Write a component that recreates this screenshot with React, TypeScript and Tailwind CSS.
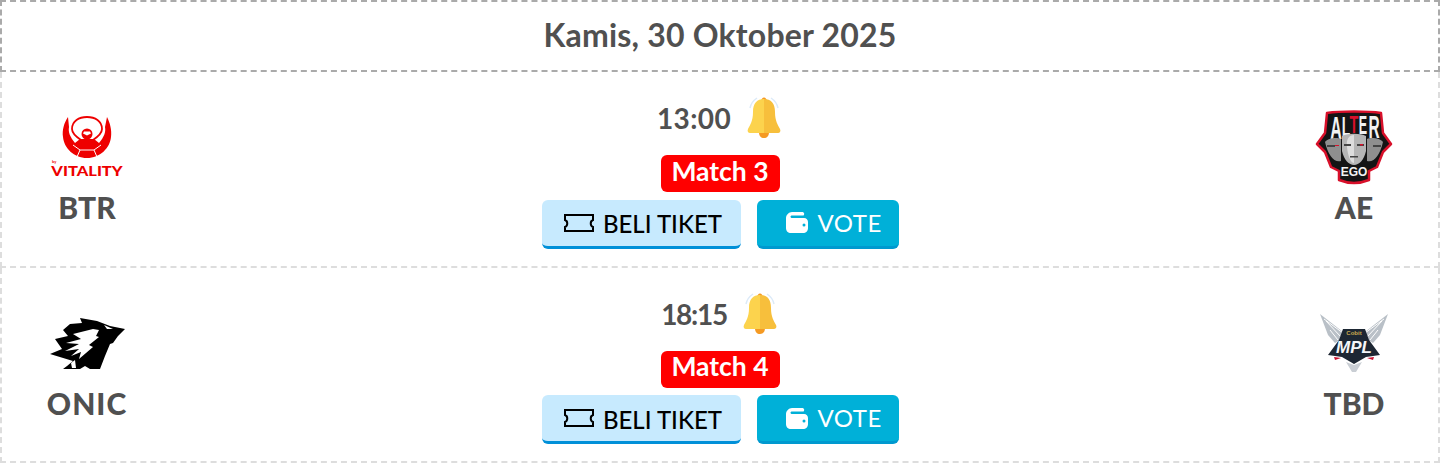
import React from 'react';

const VitalityLogo = () => (
  <svg viewBox="0 0 80 66" className="w-[80px] h-[66px]">
    <path fill="#ee0000" d="M21 3 C17 9 15 16 16 23 C17 34 27 44 40 44 C53 44 63 34 64 23 C65 16 63 9 60 3 L58 13 C59 18 57 23 52 29 L47 25 L33 25 L28 29 C23 23 21 18 22 13 Z" />
    <path fill="none" stroke="#ee0000" strokeWidth="1.8" d="M25 15 C25 7 32 3 40 3 C48 3 55 7 55 15 C55 19 49 24 46 26 M25 15 C25 19 31 24 34 26" />
    <circle cx="40" cy="20" r="5.5" fill="#ee0000" />
    <path fill="#ffffff" d="M37 17.5 h6 l1 2 -4 2 -4 -2z" />
    <path fill="none" stroke="#ffffff" strokeWidth="1" d="M26 31 L33 36 H47 L54 31 M33 36 L30 43 M47 36 L50 43" />
    <text x="5" y="49" fill="#ee0000" fontFamily="Lato, sans-serif" fontWeight="700" fontSize="4">by</text>
    <text transform="translate(40 62) scale(1.27 1)" textAnchor="middle" fill="#ee0000" fontFamily="Lato, sans-serif" fontWeight="900" fontSize="13">VITALITY</text>
  </svg>
);

const AlterLetter = ({ x, y, size, scale = 0.5, fill = '#f2f2f2', children }: { x: number; y: number; size: number; scale?: number; fill?: string; children: string }) => (
  <text transform={`translate(${x} ${y}) scale(${scale} 1)`} textAnchor="middle" fill={fill} fontFamily="Liberation Sans, sans-serif" fontWeight="700" fontSize={size}>
    {children}
  </text>
);

const AlterEgoLogo = () => (
  <svg viewBox="0 0 78 76" className="w-[78px] h-[76px]">
    <path fill="#141414" stroke="#d8102a" strokeWidth="2.5" strokeLinejoin="round" d="M12 4 C25 2 53 2 66 4 L68 24 L76 35 L68 43 L62 58 L54 62 L54 71 C44 75 34 75 24 71 L24 62 L16 58 L10 43 L2 35 L10 24 Z" />
    <AlterLetter x={21} y={30} size={32}>A</AlterLetter>
    <AlterLetter x={31} y={27} size={28}>L</AlterLetter>
    <AlterLetter x={39} y={24} size={24} scale={0.6} fill="#d8102a">T</AlterLetter>
    <AlterLetter x={48} y={25} size={25}>E</AlterLetter>
    <AlterLetter x={59} y={29} size={31}>R</AlterLetter>
    <path fill="#8f8f8f" d="M10 33 C13 29 22 28 26 30 L26 52 C19 54 13 46 10 33 Z M52 30 C56 28 65 29 68 33 C65 46 59 54 52 52 Z" />
    <path fill="#b5b5b5" d="M27 27 C33 24 45 24 51 27 L51 42 C49 51 44 56 39 56 C34 56 29 51 27 42 Z" />
    <path fill="#dddddd" d="M39 26 C34 26 31 30 32 38 C33 48 36 54 39 54 Z" />
    <path fill="#444444" d="M29 35 h7 v2 h-7z M42 35 h7 v2 h-7z M12 36 h8 v2 h-8z M58 36 h8 v2 h-8z M35 47 h8 v1.5 h-8z" />
    <path fill="#d8102a" d="M45 35 h3 v1.5 h-3z M20 36 h4 v1 h-4z" />
    <text x="39" y="67" textAnchor="middle" fill="#f2f2f2" fontFamily="Liberation Sans, sans-serif" fontWeight="700" fontSize="12">EGO</text>
  </svg>
);

const OnicLogo = () => (
  <svg viewBox="0 0 76 54" className="w-[76px] h-[54px]">
    <path fill="#000000" d="M31 2 L48 5 L61 10 L76 13 L69 20 L64 27 L61 28 L56 40 L51 53 L41 53 L36 50 L31 53 L14 53 L18 50 L24 45 L1 38 L13 33 L6 23 L19 20 L14 14 L21 8 L33 7 Z" />
    <path fill="#ffffff" d="M24 18 L44 13 L50 14 L47 20 L50 21 L40 29 L44 31 L30 43 L32 36 L22 40 L30 33 L16 35 L30 28 L17 27 L32 23 Z" />
    <path fill="#ffffff" d="M55 9 L64 13 L58 13 Z M22 47 L26 44 L27 52 L23 52 Z" />
  </svg>
);

const MplLogo = () => (
  <svg viewBox="0 0 70 60" className="w-[70px] h-[60px]">
    <path fill="#b9c0c7" d="M1 1 L24 19 L26 24 L16 30 L9 22 Z M69 1 L46 19 L44 24 L54 30 L61 22 Z" />
    <path fill="none" stroke="#ffffff" strokeWidth="1" d="M7 8 L22 24 M11 17 L19 27 M5 6 L24 20 M63 8 L48 24 M59 17 L51 27 M65 6 L46 20" />
    <path fill="#1d2733" d="M24 16 L46 16 L50 27 L61 42 L47 44 L35 51 L23 44 L9 42 L20 27 Z" />
    <path fill="#c9ced4" d="M27 49 L35 52 L43 49 L37 59 L33 59 Z" />
    <text x="35" y="40" textAnchor="middle" fill="#f4f6f8" fontFamily="Liberation Sans, sans-serif" fontWeight="700" fontStyle="italic" fontSize="17">MPL</text>
    <text x="35" y="22" textAnchor="middle" fill="#c9a94f" fontFamily="Liberation Sans, sans-serif" fontWeight="700" fontSize="6">Cobit</text>
    <path fill="#c8102e" d="M15 44 L22 45 L16 47 Z M55 44 L48 45 L54 47 Z" />
  </svg>
);

const Bell = () => (
  <svg viewBox="0 0 38 46" className="w-[38px] h-[46px]">
    <path fill="none" stroke="#dceaf8" strokeWidth="1.5" d="M5 14 C6 9 9 6 12 4 M33 14 C32 9 29 6 26 4" />
    <path fill="#f59a23" d="M14 38 h10 c0 4 -2 6 -5 6 s-5 -2 -5 -6z M16 8 c0 -6 6 -6 6 0z" />
    <path fill="#fcd34d" d="M19 5 C12 5 8 9 8 18 C8 27 5 31 3 35 C2 37 3 39 5 39 L19 39 Z" />
    <path fill="#f7bf3c" d="M19 5 C26 5 30 9 30 18 C30 27 33 31 35 35 C36 37 35 39 33 39 L19 39 Z" />
  </svg>
);

const Ticket = () => (
  <svg viewBox="0 0 30 18" className="w-[30px] h-[18px]" fill="none" stroke="#000000" strokeWidth="2">
    <path d="M1 1 H29 V6 C26 7 26 12 29 13 V17 H1 V13 C4 12 4 7 1 6 Z" />
  </svg>
);

const WalletIcon = () => (
  <svg viewBox="0 0 22 21" className="w-[22px] h-[21px]">
    <path fill="#ffffff" d="M6 0 H16 C18 0 19 2 17.5 3.5 H6 C4 3.5 4 6 6 6 H18 C20.5 6 22 8 22 10 V16 C22 19 20 21 17 21 H5 C2 21 0 19 0 16 V6 C0 3 3 0 6 0 Z" />
    <circle cx="18" cy="13" r="1.5" fill="#00b0d8" />
  </svg>
);

interface Match {
  home: string;
  homeClass: string;
  away: string;
  homeLogo: React.ReactNode;
  awayLogo: React.ReactNode;
  time: string;
  timeClass: string;
  label: string;
}

const matches: Match[] = [
  { home: 'BTR', homeClass: '', away: 'AE', homeLogo: <VitalityLogo />, awayLogo: <AlterEgoLogo />, time: '13:00', timeClass: 'tracking-[0.4px]', label: 'Match 3' },
  { home: 'ONIC', homeClass: 'tracking-[1px]', away: 'TBD', homeLogo: <OnicLogo />, awayLogo: <MplLogo />, time: '18:15', timeClass: 'tracking-[-1.3px]', label: 'Match 4' },
];

const Team = ({ logo, name, nameClass = '' }: { logo: React.ReactNode; name: string; nameClass?: string }) => (
  <div className="w-[100px] flex flex-col items-center">
    <div className="h-[84px] flex items-center justify-center">{logo}</div>
    <span className={`text-[30px] leading-[36px] font-black text-[#505050] ${nameClass}`}>{name}</span>
  </div>
);

const MatchRow = ({ match }: { match: Match }) => (
  <div className="h-[195.5px] border-2 border-t-0 border-dashed border-[#dddddd] pl-[35px] pr-[34px] flex justify-between">
    <div className="pt-[33px]">
      <Team logo={match.homeLogo} name={match.home} nameClass={match.homeClass} />
    </div>
    <div className="mr-[1px] flex flex-col items-center pt-[22px]">
      <div className="h-[46px] flex items-center gap-[14px]">
        <span className={`pt-[2px] text-[28px] font-bold text-[#505050] ${match.timeClass}`}>{match.time}</span>
        <Bell />
      </div>
      <div className="mt-[15px] w-[119px] h-[37px] pb-[4px] rounded-[6px] bg-[#ff0000] flex items-center justify-center text-[26.5px] font-bold text-white">
        {match.label}
      </div>
      <div className="mt-[7.9px] flex gap-[16px]">
        <button className="w-[199px] h-[49px] pl-[4px] rounded-[6px] bg-[#c7eafe] border-b-[3px] border-[#0090d8] flex items-center justify-center gap-[9px] text-[24px] font-medium text-black">
          <Ticket />
          <span className="pt-[3px]">BELI TIKET</span>
        </button>
        <button className="w-[142px] h-[49px] pl-[29px] rounded-[6px] bg-[#00b0d8] border-b-[3px] border-[#0099cf] flex items-center gap-[10px] text-[24px] tracking-[0.5px] text-white">
          <WalletIcon />
          VOTE
        </button>
      </div>
    </div>
    <div className="pt-[33px]">
      <Team logo={match.awayLogo} name={match.away} />
    </div>
  </div>
);

export default function App() {
  return (
    <div className="w-[1440px] bg-white font-['Lato',sans-serif]">
      <div className="h-[72px] pb-[3px] border-2 border-dashed border-[#aaaaaa] flex items-center justify-center text-[32px] tracking-[0.2px] font-bold text-[#505050]">
        Kamis, 30 Oktober 2025
      </div>
      {matches.map((match) => (
        <MatchRow key={match.label} match={match} />
      ))}
    </div>
  );
}
